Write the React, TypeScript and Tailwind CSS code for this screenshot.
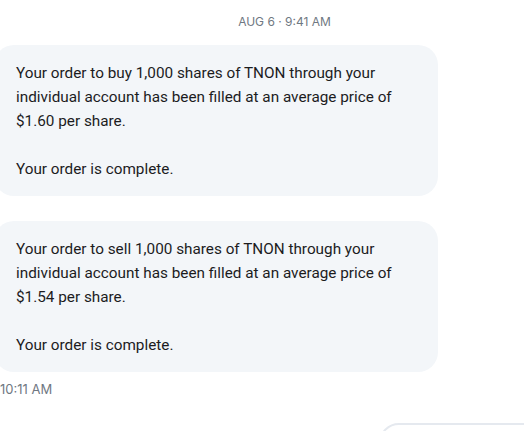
const font = { fontFamily: 'Roboto, "Liberation Sans", sans-serif' }
const small = { fontFamily: 'Inter, "Liberation Sans", sans-serif' }

function Bubble({ action, price }: { action: string; price: string }) {
  return (
    <div className="w-[444px] rounded-[20px] bg-[#f3f6f9] pb-[15px] pl-[22px] pr-4 pt-4 text-[15.3px] leading-6 text-[#1c1c1e]">
      <p className="m-0">
        Your order to {action} 1,000 shares of TNON through your individual account has been filled at an average price of {price} per share.
      </p>
      <p className="m-0 mt-6">Your order is complete.</p>
    </div>
  )
}

export default function App() {
  return (
    <div className="h-[431px] w-[524px] overflow-hidden bg-white" style={font}>
      <div className="ml-[-22px] flex w-[613px] flex-col px-4 pt-[14px]">
        <div className="text-center text-xs leading-4 text-[#6f7882]" style={small}>AUG 6 · 9:41 AM</div>
        <div className="mt-[15px] flex flex-col gap-[25px]">
          <Bubble action="buy" price="$1.60" />
          <Bubble action="sell" price="$1.54" />
        </div>
        <div className="ml-[6px] mt-[9px] text-[13px] leading-4 text-[#6f7882]" style={small}>10:11 AM</div>
        <div className="ml-auto mt-[26px] h-12 w-[196px] rounded-[20px] border-2 border-[#e5e9ef] bg-white" />
      </div>
    </div>
  )
}
